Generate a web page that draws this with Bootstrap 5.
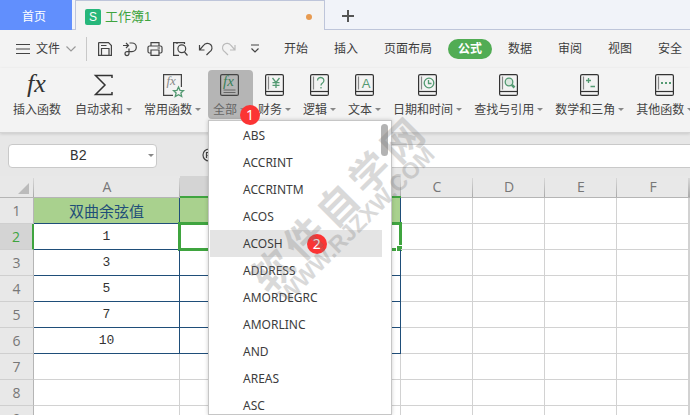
<!DOCTYPE html>
<html lang="zh-CN">
<head>
<meta charset="utf-8">
<meta name="viewport" content="width=device-width, initial-scale=1">
<title>工作簿1</title>
<link href="https://cdn.jsdelivr.net/npm/bootstrap@5.3.0/dist/css/bootstrap.min.css" rel="stylesheet">
<style>
:root{--ui:"Noto Sans","Noto Sans CJK SC",sans-serif;--green:#3fa43f;--navy:#1f4e79;--ink:#3c3c3c}
body{font-family:"Liberation Sans","Noto Sans CJK SC",sans-serif;font-size:12px;line-height:16px;color:var(--ink);background:#f3f3f3}
a{color:inherit;text-decoration:none}
svg{display:block;flex:none;overflow:visible}
.ln{fill:none;stroke:#444;stroke-width:1.2}
.gr{fill:none;stroke:#539a72;stroke-width:1.3}
.tabstrip{height:30px;background:#f1f3f9}
.home-tab{width:72px;padding-right:4px;padding-top:3px;background:#618ffd}
.tab-edge{width:3px;border-bottom:1px solid #bec5da}
.book-tab{width:250px;padding:3px 12px 0 9px;background:#f3f3f3;border:1px solid #bec5da;border-bottom:0;color:var(--green);font-size:13px}
.tab-rest{border-bottom:1px solid #bec5da;padding:3px 0 0 17px}
.logo{width:16px;height:16px;border-radius:2px;background:#27b77b;font:12px/16px "Liberation Sans",sans-serif}
.unsaved{width:6px;height:6px;background:#e79a50}
.menubar{height:38px;padding-left:16px}
.rule{width:1px;height:24px;background:#c8c8c8}
.quick{gap:9px;padding:0 11px 0 10px}
.quick button,.file-btn{padding:0;border:0;background:none;color:inherit}
.file-btn{gap:6px;width:70px}
.menu-tabs a{margin:0 3px;padding:0 10px;line-height:20px;border-radius:10px;white-space:nowrap}
.menu-tabs a.active{background:#51ac54;color:#fff;font-weight:700}
.ribbon{height:65px;padding:2px 0 0 8px;border-bottom:1px solid #d4d4d4;box-shadow:0 1px 3px #0002;position:relative;z-index:3}
.tool{height:49px;padding:4px 7px 0 5px;border:0;border-radius:4px;background:none;color:#444;white-space:nowrap;line-height:16px}
.tool.plain{padding-right:9px}
.tool.active{background:#b5b5b5;color:#666}
.tool-label{gap:3px;margin-top:6px}
.caret{width:6px;border:3px solid transparent;border-top-color:#888;border-bottom:0;margin-top:-2px}
.badge-dot{width:20px;height:20px;background:#fb3434;color:#fff;font:14px/20px var(--ui)}
.step-one{position:absolute;left:32px;top:35px;z-index:2}
.step-two{margin-left:24px}
.fn-menu{position:absolute;left:0;top:50px;width:184px;height:calc(100vh - 120px);background:#fff;border:1px solid #c6c6c6;box-shadow:0 0 4px #0003;padding:1px 9px 0 1px;overflow:hidden}
.fn-menu a{height:27px;padding-left:33px;font:12px/27px var(--ui)}
.fn-menu a.active{background:#e4e4e4}
.thumb{position:absolute;right:3px;top:3px;width:7px;height:32px;border-radius:4px;background:#b3b3b3}
.formula-bar{height:43px;padding:11px 0 8px 8px;background:#e7e7e7}
.name-box{width:149px;height:24px;background:#fff;border:1px solid #c9c9c9;border-radius:4px;padding-right:2px}
.name-box input{border:0;background:none;min-width:0;color:#333;font:14px/20px "Liberation Mono",monospace;outline:0}
.find-fn{margin-left:46px}
.formula-input{border:1px solid #c9c9c9;border-right:0;background:#fff;height:24px;outline:0}
.sheet-area{min-height:0;background:#fff}
.sheet{table-layout:fixed;border-collapse:separate;border-spacing:0;width:100%;font:13px/25px "Liberation Mono",monospace;color:#333}
.sheet th,.sheet td{padding:0;height:26px;text-align:center;border:0 solid #d2d2d2;border-width:0 1px 1px 0;position:relative}
.sheet th{background:#e8e8e8;color:#777;font:400 14px/25px "Open Sans",sans-serif}
.sheet thead th{height:22px;line-height:20px;border-bottom-color:#b5b5b5;border-right:0}
.sheet thead th::after{content:"";position:absolute;right:0;top:2px;bottom:0;width:1px;background:linear-gradient(#d8d8d8,#aaa)}
.sheet tbody th{border-right-color:#b5b5b5;border-bottom-color:#cfcfcf}
.sheet thead th.on,.sheet tbody th.on{background:#d4d4d4}
.sheet thead th.on{border-bottom:2px solid var(--green)}
.sheet tbody th.on{color:var(--green);border-right:2px solid var(--green)}
.sheet td.box{border-color:var(--navy)}
.sheet td.title{background:#a9d18e;color:var(--navy);font:15px/24px "Noto Sans CJK SC",sans-serif}
.sheet .corner svg{margin:4px 0 0 18px}
.c-head{width:34px}.c-a{width:146px}.c-b{width:221px}.c-x{width:72px}
.selection{position:absolute;inset:-2px;border:3px solid var(--green)}
.selection::after{content:"";position:absolute;right:-4px;bottom:-4px;width:7px;height:7px;background:var(--green);border:1px solid #fff}
.stamp{position:absolute;left:343px;top:211px;transform:translate(-50%,-50%) rotate(-45deg);z-index:9;color:#777;opacity:.27;pointer-events:none;white-space:nowrap}
.stamp-name{gap:6px;font:700 40px/38px "Noto Sans CJK SC",sans-serif}
.stamp-site{font:700 23px/20px "Liberation Sans",sans-serif}
</style>
<script src="https://cdn.jsdelivr.net/npm/bootstrap@5.3.0/dist/js/bootstrap.bundle.min.js"></script>
</head>
<body class="vh-100 overflow-hidden d-flex flex-column position-relative">
<svg width="0" height="0" class="position-absolute" aria-hidden="true"><defs>
<g id="bk"><rect class="ln" x=".6" y=".6" width="17.8" height="20.8" rx="1.5" style="stroke:#333"/><path class="ln" d="M1 17.5H18" style="stroke:#333"/><path class="ln" d="M3.5 2.500V15.500" style="stroke:#888"/></g>
</defs></svg>

<header class="tabstrip d-flex flex-shrink-0">
  <a href="#" class="home-tab text-white d-flex align-items-center justify-content-center">首页</a>
  <div class="tab-edge"></div>
  <a href="#" class="book-tab d-flex align-items-center"><span class="logo text-white text-center me-1">S</span><span>工作簿1</span><span class="unsaved rounded-circle ms-auto"></span></a>
  <div class="tab-rest flex-grow-1 d-flex align-items-center"><button class="border-0 bg-transparent p-0" aria-label="新建"><svg width="12" height="12"><path d="M6 0V12M0 6H12" stroke="#555" stroke-width="2"/></svg></button></div>
</header>

<nav class="menubar d-flex align-items-center flex-shrink-0">
  <button class="file-btn d-flex align-items-center flex-shrink-0"><svg width="14" height="10"><path class="ln" d="M0 .5H14M0 5H14M0 9.500H14"/></svg><span>文件</span><svg width="10" height="6"><path d="M.5 .5 5 5 9.500 .5" fill="none" stroke="#999" stroke-width="1.2"/></svg></button>
  <div class="rule flex-shrink-0"></div>
  <div class="quick d-flex align-items-center flex-shrink-0">
    <button aria-label="保存"><svg width="16" height="16"><path class="ln" d="M2 1.600H11.500L14.400 4.500V14.400H1.600V2ZM4.500 14V7.500H12V14M4 4.500H9.500"/></svg></button>
    <button aria-label="输出"><svg width="16" height="16"><path class="ln" d="M1 4.500H6M4 2 6.500 4.500 4 7M7.500 2H10a4.300 4.300 0 0 1 0 8.600H5a2 2 0 1 0 2 2V7.500"/></svg></button>
    <button aria-label="打印"><svg width="16" height="16"><path class="ln" d="M4 5V1.600H12V5M4 12H2.500A1.500 1.500 0 0 1 1 10.500V6.500A1.500 1.500 0 0 1 2.500 5H13.500A1.500 1.500 0 0 1 15 6.500V10.500A1.500 1.500 0 0 1 13.500 12H12M4 9H12V14.400H4ZM10.500 7H13"/></svg></button>
    <button aria-label="打印预览"><svg width="16" height="16"><path class="ln" d="M7 14.400H1.600V1.600H12.500V3M5 1.600V3M12.500 11 15.500 14.500"/><circle class="ln" cx="9.800" cy="7.700" r="3.900"/></svg></button>
    <button aria-label="撤销"><svg width="16" height="16"><path class="ln" d="M2.500 4V9H7.500M3 8.500 6.500 4.500A4.600 4.600 0 1 1 12.500 11L9.500 14"/></svg></button>
    <button aria-label="恢复"><svg width="16" height="16"><path class="ln" d="M13 4V9H8M12.500 8.500 9 4.500A4.600 4.600 0 1 0 3 11L6 14" style="stroke:#bbb"/></svg></button>
    <button class="ms-1" aria-label="更多"><svg width="9" height="10"><path class="ln" d="M0 1H8M.5 4.500 4 8 7.500 4.500"/></svg></button>
  </div>
  <div class="menu-tabs d-flex flex-shrink-0">
    <a href="#">开始</a><a href="#">插入</a><a href="#">页面布局</a><a href="#" class="active">公式</a><a href="#">数据</a><a href="#">审阅</a><a href="#">视图</a><a href="#">安全</a>
  </div>
</nav>

<section class="ribbon d-flex flex-shrink-0">
  <button class="tool plain flex-shrink-0 d-flex flex-column align-items-center"><svg width="24" height="22"><text x="2" y="18" font-family="Liberation Serif" font-style="italic" font-size="26" fill="#333">fx</text></svg><span class="tool-label">插入函数</span></button>
  <button class="tool flex-shrink-0 d-flex flex-column align-items-center"><svg width="19" height="22"><path d="M18 4V1.500H1.500L11 11 1.500 20.500H18V18" fill="none" stroke="#333" stroke-width="1.500"/></svg><span class="tool-label d-flex align-items-center">自动求和<i class="caret"></i></span></button>
  <button class="tool flex-shrink-0 d-flex flex-column align-items-center"><svg width="19" height="22"><path class="ln" d="M10 21.400H.6V.6H18.400V13"/><text x="3.500" y="11" font-family="Liberation Serif" font-style="italic" font-size="13" fill="#888">fx</text><path class="gr" style="fill:#f3f3f3" d="M15.500 13 17 16.300 20.500 16.600 17.900 19 18.700 22.500 15.500 20.700 12.300 22.500 13.100 19 10.500 16.600 14 16.300Z"/></svg><span class="tool-label d-flex align-items-center">常用函数<i class="caret"></i></span></button>
  <div class="position-relative flex-shrink-0">
    <button class="tool active d-flex flex-column align-items-center" aria-expanded="true"><svg width="19" height="22"><rect class="ln" x=".6" y=".6" width="17.8" height="20.8" rx="1.5"/><text x="3" y="12" font-family="Liberation Serif" font-style="italic" font-size="15" fill="#398058">fx</text><path class="ln" d="M3.500 16H15.500M3.500 18.500H15.500" style="stroke:#666;stroke-width:1"/></svg><span class="tool-label d-flex align-items-center">全部<i class="caret"></i></span></button>
    <span class="badge-dot step-one rounded-circle text-center">1</span>
    <div class="fn-menu">
      <a href="#" class="d-block">ABS</a><a href="#" class="d-block">ACCRINT</a><a href="#" class="d-block">ACCRINTM</a><a href="#" class="d-block">ACOS</a>
      <a href="#" class="active d-flex align-items-center">ACOSH<span class="badge-dot step-two rounded-circle text-center">2</span></a>
      <a href="#" class="d-block">ADDRESS</a><a href="#" class="d-block">AMORDEGRC</a><a href="#" class="d-block">AMORLINC</a><a href="#" class="d-block">AND</a><a href="#" class="d-block">AREAS</a><a href="#" class="d-block">ASC</a>
      <span class="thumb"></span>
    </div>
  </div>
  <button class="tool flex-shrink-0 d-flex flex-column align-items-center"><svg width="19" height="22"><use href="#bk"/><path class="gr" d="M7.500 4 11 8.500 14.500 4M11 8.500V14M7.500 8.700H14.500M7.500 11.300H14.500"/></svg><span class="tool-label d-flex align-items-center">财务<i class="caret"></i></span></button>
  <button class="tool flex-shrink-0 d-flex flex-column align-items-center"><svg width="19" height="22"><use href="#bk"/><path class="gr" d="M7.500 6.500a3.200 3 0 1 1 5 2.500Q11 10 11 11.500M11 13V14.500"/></svg><span class="tool-label d-flex align-items-center">逻辑<i class="caret"></i></span></button>
  <button class="tool flex-shrink-0 d-flex flex-column align-items-center"><svg width="19" height="22"><use href="#bk"/><text x="11.200" y="13.500" text-anchor="middle" font-family="Liberation Sans" font-size="13" fill="#539a72">A</text></svg><span class="tool-label d-flex align-items-center">文本<i class="caret"></i></span></button>
  <button class="tool flex-shrink-0 d-flex flex-column align-items-center"><svg width="19" height="22"><use href="#bk"/><circle class="gr" cx="11" cy="9" r="4.800"/><path class="gr" d="M10.500 6V9.500H13.500"/></svg><span class="tool-label d-flex align-items-center">日期和时间<i class="caret"></i></span></button>
  <button class="tool flex-shrink-0 d-flex flex-column align-items-center"><svg width="19" height="22"><use href="#bk"/><circle class="gr" cx="10" cy="8" r="3.800" style="fill:#dbe7df"/><path class="gr" d="M12.800 10.800 15.500 13.500" style="stroke-width:2.500"/></svg><span class="tool-label d-flex align-items-center">查找与引用<i class="caret"></i></span></button>
  <button class="tool flex-shrink-0 d-flex flex-column align-items-center"><svg width="19" height="22"><use href="#bk"/><path class="gr" d="M8.500 4V9M6 6.500H11M10.500 12.500H15"/></svg><span class="tool-label d-flex align-items-center">数学和三角<i class="caret"></i></span></button>
  <button class="tool flex-shrink-0 d-flex flex-column align-items-center"><svg width="19" height="22"><use href="#bk"/><path d="M6 9H8M10 9H12M14 9H16" stroke="#539a72" stroke-width="2"/></svg><span class="tool-label d-flex align-items-center">其他函数<i class="caret"></i></span></button>
</section>

<section class="formula-bar d-flex flex-shrink-0">
  <div class="name-box d-flex align-items-center flex-shrink-0"><input class="flex-grow-1 text-center" aria-label="名称框" value="B2"><i class="caret"></i></div>
  <button class="find-fn border-0 bg-transparent p-0 me-5 align-self-start" aria-label="查找函数"><svg width="14" height="20"><circle class="ln" cx="6" cy="11" r="6"/><path class="ln" d="M3.500 14V8.500H6.500a1.500 1.500 0 0 1 0 3H4.500M5.500 11.500 8 14"/></svg></button>
  <input class="formula-input flex-grow-1" aria-label="编辑栏">
</section>

<main class="sheet-area flex-grow-1 overflow-hidden">
<table class="sheet">
<colgroup><col class="c-head"><col class="c-a"><col class="c-b"><col class="c-x"><col class="c-x"><col class="c-x"><col class="c-x"><col></colgroup>
<thead><tr><th class="corner"><svg width="11" height="11"><path d="M11 0V11H0Z" fill="#bbb"/></svg></th><th>A</th><th class="on">B</th><th>C</th><th>D</th><th>E</th><th>F</th><th></th></tr></thead>
<tbody>
<tr><th>1</th><td class="box title">双曲余弦值</td><td class="box title"></td><td></td><td></td><td></td><td></td><td></td></tr>
<tr><th class="on">2</th><td class="box">1</td><td class="box"><span class="selection"></span></td><td></td><td></td><td></td><td></td><td></td></tr>
<tr><th>3</th><td class="box">3</td><td class="box"></td><td></td><td></td><td></td><td></td><td></td></tr>
<tr><th>4</th><td class="box">5</td><td class="box"></td><td></td><td></td><td></td><td></td><td></td></tr>
<tr><th>5</th><td class="box">7</td><td class="box"></td><td></td><td></td><td></td><td></td><td></td></tr>
<tr><th>6</th><td class="box">10</td><td class="box"></td><td></td><td></td><td></td><td></td><td></td></tr>
<tr><th>7</th><td></td><td></td><td></td><td></td><td></td><td></td><td></td></tr>
<tr><th>8</th><td></td><td></td><td></td><td></td><td></td><td></td><td></td></tr>
<tr><th>9</th><td></td><td></td><td></td><td></td><td></td><td></td><td></td></tr>
</tbody></table>
</main>
<div class="stamp text-center" aria-hidden="true"><div class="stamp-name d-flex justify-content-center"><span>软</span><span>件</span><span>自</span><span>学</span><span>网</span></div><div class="stamp-site">WWW.RJZXW.COM</div></div>
</body>
</html>
